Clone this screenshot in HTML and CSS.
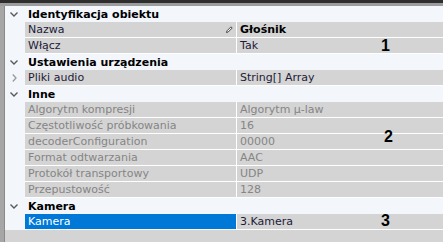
FILE: index.html
```html
<!DOCTYPE html>
<html>
<head>
    <meta charset="utf-8">
    <title>Właściwości</title>
    <link rel="stylesheet" href="styles.css">
</head>
<body>
    <div class="topbar"></div>
    <div class="frame">
        <div class="edge"></div>
        <div class="grid">
            <div class="group">
                <span class="toggle"><svg width="8" height="5" viewBox="0 0 8 5"><path d="M0.5 0.5 L4 4 L7.5 0.5" fill="none" stroke="#5a5a5a" stroke-width="1.4"/></svg></span>
                <span class="group-name">Identyfikacja obiektu</span>
            </div>
            <div class="prop">
                <span class="toggle"></span>
                <span class="name">Nazwa
                    <svg class="pencil" width="7" height="7" viewBox="0 0 7 7"><path d="M0.5 6.5 L1 4.8 L5 0.8 L6.2 2 L2.2 6 Z" fill="#fff" stroke="#333" stroke-width="0.9"/></svg>
                </span>
                <span class="value strong">Głośnik</span>
            </div>
            <div class="prop">
                <span class="toggle"></span>
                <span class="name">Włącz</span>
                <span class="value">Tak</span>
            </div>
            <div class="group">
                <span class="toggle"><svg width="8" height="5" viewBox="0 0 8 5"><path d="M0.5 0.5 L4 4 L7.5 0.5" fill="none" stroke="#5a5a5a" stroke-width="1.4"/></svg></span>
                <span class="group-name">Ustawienia urządzenia</span>
            </div>
            <div class="prop">
                <span class="toggle"><svg width="5" height="8" viewBox="0 0 5 8"><path d="M0.8 0.5 L4 4 L0.8 7.5" fill="none" stroke="#9a9a9a" stroke-width="1.3"/></svg></span>
                <span class="name">Pliki audio</span>
                <span class="value">String[] Array</span>
            </div>
            <div class="group">
                <span class="toggle"><svg width="8" height="5" viewBox="0 0 8 5"><path d="M0.5 0.5 L4 4 L7.5 0.5" fill="none" stroke="#5a5a5a" stroke-width="1.4"/></svg></span>
                <span class="group-name">Inne</span>
            </div>
            <div class="prop disabled">
                <span class="toggle"></span>
                <span class="name">Algorytm kompresji</span>
                <span class="value">Algorytm µ-law</span>
            </div>
            <div class="prop disabled">
                <span class="toggle"></span>
                <span class="name">Częstotliwość próbkowania</span>
                <span class="value">16</span>
            </div>
            <div class="prop disabled">
                <span class="toggle"></span>
                <span class="name">decoderConfiguration</span>
                <span class="value">00000</span>
            </div>
            <div class="prop disabled">
                <span class="toggle"></span>
                <span class="name">Format odtwarzania</span>
                <span class="value">AAC</span>
            </div>
            <div class="prop disabled">
                <span class="toggle"></span>
                <span class="name">Protokół transportowy</span>
                <span class="value">UDP</span>
            </div>
            <div class="prop disabled">
                <span class="toggle"></span>
                <span class="name">Przepustowość</span>
                <span class="value">128</span>
            </div>
            <div class="group">
                <span class="toggle"><svg width="8" height="5" viewBox="0 0 8 5"><path d="M0.5 0.5 L4 4 L7.5 0.5" fill="none" stroke="#5a5a5a" stroke-width="1.4"/></svg></span>
                <span class="group-name">Kamera</span>
            </div>
            <div class="prop selected">
                <span class="toggle"></span>
                <span class="name">Kamera</span>
                <span class="value">3.Kamera</span>
            </div>
            <div class="filler"></div>
        </div>
    </div>
    <span class="mark mark-1">1</span>
    <span class="mark mark-2">2</span>
    <span class="mark mark-3">3</span>
</body>
</html>
```

FILE: styles.css
```css
body {
    margin: 0;
    width: 443px;
    height: 242px;
    overflow: hidden;
    font-family: "DejaVu Sans", Verdana, sans-serif;
    font-size: 11px;
    color: #1c1a38;
    background: #d4d4d4;
    position: relative;
}
.topbar {
    height: 3px;
    background: #2e2e2e;
    border-bottom: 3px solid #9c9c9c;
}
.frame {
    display: flex;
    height: 236px;
}
.edge {
    width: 4px;
    background: #a6a6a6;
    border-right: 1px solid #8a8a8a;
}
.grid {
    flex: 1;
    display: flex;
    flex-direction: column;
    background: #f3f6fb;
}
.group {
    display: flex;
    align-items: center;
    height: 16px;
}
.toggle {
    width: 20px;
    flex: none;
    display: flex;
    align-items: center;
    justify-content: center;
    padding-right: 2px;
    box-sizing: border-box;
}
.group-name {
    font-weight: bold;
    color: #000;
    padding-left: 3px;
}
.prop {
    display: flex;
    height: 16px;
}
.prop .name {
    width: 212px;
    flex: none;
    display: flex;
    align-items: center;
    padding-left: 3px;
    box-sizing: border-box;
    background: #d4d4d4;
    border-bottom: 1px solid #fff;
    border-right: 1px solid #fff;
}
.prop .value {
    flex: 1;
    display: flex;
    align-items: center;
    padding-left: 3px;
    background: #d4d4d4;
    border-bottom: 1px solid #fff;
}
.pencil {
    margin-left: auto;
    margin-right: 3px;
}
.strong {
    font-weight: bold;
    color: #000;
}
.disabled .name,
.disabled .value {
    color: #858585;
}
.selected .name {
    background: #0078d7;
    color: #fff;
}
.filler {
    flex: 1;
    background: #d4d4d4;
}
.mark {
    position: absolute;
    font-family: "Liberation Sans", Arial, sans-serif;
    font-weight: bold;
    font-size: 16px;
    color: #000;
}
.mark-1 {
    left: 381px;
    top: 37px;
}
.mark-2 {
    left: 384px;
    top: 128px;
}
.mark-3 {
    left: 381px;
    top: 212px;
}
```
